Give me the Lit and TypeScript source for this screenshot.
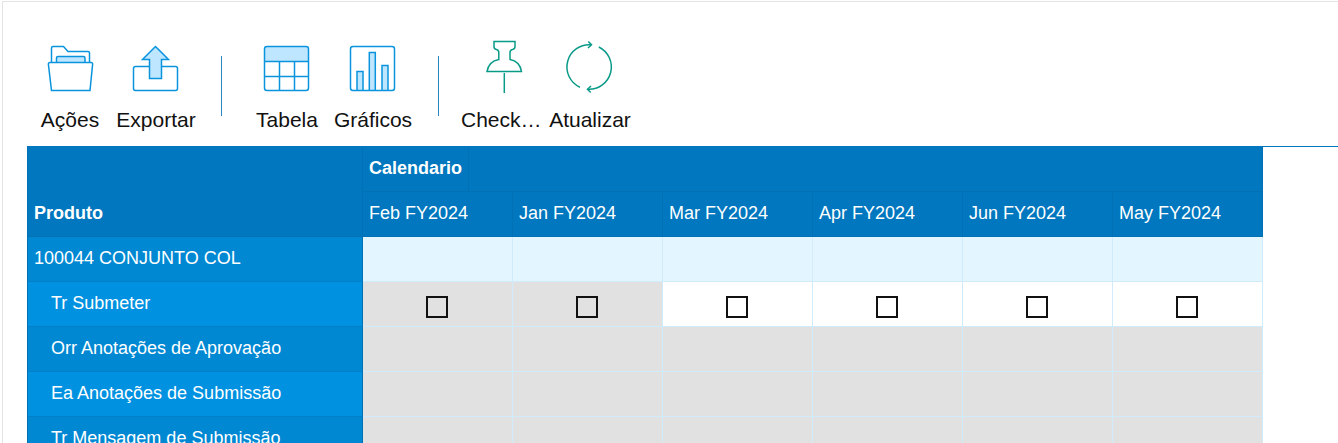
import { LitElement, html, css, svg, SVGTemplateResult } from "lit";
import { customElement } from "lit/decorators.js";
import { classMap } from "lit/directives/class-map.js";

interface Tool {
  label: string;
  icon: SVGTemplateResult;
  tone?: "green";
  clipped?: boolean;
}

interface Row {
  label: string;
  kind: "total" | "check" | "note";
}

const folder = svg`
  <path d="M8.5 22V8q0-1.5 1.500-1.500H20.500L25 11.500H45q1.500 0 1.500 1.500V22"/>
  <path class="fill" d="M13.500 22V18q0-1.500 1.500-1.500H40.500q1.500 0 1.500 1.500V22"/>
  <path d="M7 22.500H48q1.800 0 1.600 1.800L47 50.500H8.500L5.400 24.300q-.2-1.800 1.600-1.800z"/>`;
const upload = svg`
  <rect x="4.5" y="26.5" width="44" height="24" rx="2"/>
  <path class="fill" d="M26.500 6.500 39.500 19.500H32.500V38.500H20.500V19.500H13.500z"/>`;
const grid = svg`
  <path class="fill" stroke="none" d="M5 21.500V9q0-2 2-2H46q2 0 2 2V21.500z"/>
  <rect x="4.5" y="6.5" width="44" height="44" rx="2.5"/>
  <path d="M4.500 21.500H48.500M4.500 36.500H48.500M19.500 21.500V50.500M34.500 21.500V50.500"/>`;
const chart = svg`
  <path class="fill" d="M11 50.500V31.500H17V50.500M23.300 50.500V12.500H29.300V50.500M36 50.500V25.500H42V50.500"/>
  <rect x="4.5" y="6.5" width="44" height="44" rx="2.5"/>`;
const pin = svg`
  <path d="M17 1.600H38V6.500Q38 9 35.500 9.500Q33 10 33 12.500V19.500Q42.800 21.300 44.500 31.500H10Q11.800 21.300 21.800 19.500V12.500Q21.800 10 19.400 9.500Q17 9 17 6.500z"/>
  <path d="M27.300 33V53"/>`;
const refresh = svg`
  <path d="M28.300 4.800A22.300 22.300 0 0 0 17 47.300M35.800 7A22.300 22.300 0 0 1 24.500 49.300"/>
  <path d="M25.300 1.500 28.500 4.800 25 8M28 46 24.500 49.300 27.700 52.500"/>`;

const groups: Tool[][] = [
  [
    { label: "Ações", icon: folder },
    { label: "Exportar", icon: upload },
  ],
  [
    { label: "Tabela", icon: grid },
    { label: "Gráficos", icon: chart },
  ],
  [
    { label: "Check…", icon: pin, tone: "green", clipped: true },
    { label: "Atualizar", icon: refresh, tone: "green" },
  ],
];

const periods = ["Feb FY2024", "Jan FY2024", "Mar FY2024", "Apr FY2024", "Jun FY2024", "May FY2024"];
const closedPeriods = new Set(["Feb FY2024", "Jan FY2024"]);

const rows: Row[] = [
  { label: "100044 CONJUNTO COL", kind: "total" },
  { label: "Tr Submeter", kind: "check" },
  { label: "Orr Anotações de Aprovação", kind: "note" },
  { label: "Ea Anotações de Submissão", kind: "note" },
  { label: "Tr Mensagem de Submissão", kind: "note" },
];

@customElement("tool-bar")
class ToolBar extends LitElement {
  static styles = css`
    :host {
      display: block;
    }
    .bar {
      display: flex;
      gap: 22px;
      padding: 38px 0 14px;
    }
    .group {
      display: flex;
    }
    .separator {
      width: 1px;
      margin: 16px 0;
      background: #2a86c2;
    }
    .tool {
      display: flex;
      flex-direction: column;
      align-items: center;
      gap: 14px;
      width: 86px;
      padding: 0;
      border: 0;
      background: none;
      color: #111;
      font: 21px/24px "Liberation Sans", Arial, sans-serif;
      cursor: pointer;
    }
    .label {
      white-space: nowrap;
    }
    .clipped {
      align-self: flex-start;
    }
    .icon {
      width: 54px;
      height: 54px;
      fill: none;
      stroke: #0a94de;
      stroke-width: 1.5;
    }
    .green {
      stroke: #0a9a88;
    }
    .fill {
      fill: #bfe6ff;
    }
  `;

  render() {
    return html`<div class="bar" role="toolbar">
      ${groups.map(
        (group, i) => html`${i ? html`<div class="separator"></div>` : ""}
          <div class="group">${group.map((tool) => this.renderTool(tool))}</div>`
      )}
    </div>`;
  }

  private renderTool(tool: Tool) {
    return html`<button class="tool" type="button">
      <svg class=${classMap({ icon: true, green: tool.tone === "green" })} viewBox="0 0 54 54" aria-hidden="true">
        ${tool.icon}
      </svg>
      <span class=${classMap({ label: true, clipped: !!tool.clipped })}>${tool.label}</span>
    </button>`;
  }
}

@customElement("plan-grid")
class PlanGrid extends LitElement {
  static styles = css`
    :host {
      display: block;
      border-top: 1px solid #0077be;
    }
    .grid {
      table-layout: fixed;
      width: 1236px;
      border-spacing: 0;
      color: #fff;
      font: 18px/22px "Liberation Sans", Arial, sans-serif;
    }
    .labels {
      width: 336px;
    }
    th,
    td {
      box-sizing: border-box;
      height: 45px;
      padding: 0 6px;
      border: 0 solid #0071b5;
      border-width: 0 1px 1px 0;
      text-align: left;
      white-space: nowrap;
    }
    .head {
      padding-bottom: 2px;
      background: #0077be;
    }
    .corner {
      padding: 0 6px 12px;
      border-left-width: 1px;
      vertical-align: bottom;
    }
    .dimension {
      padding: 0;
    }
    .dimension-name {
      display: inline-block;
      padding: 10px 6px 12px;
      border-right: 1px solid #0071b5;
    }
    .period,
    .row-label {
      font-weight: 400;
    }
    .row-label {
      padding: 0 6px 2px 23px;
      border-left-width: 1px;
      border-bottom-color: #007fc8;
      background: #0088d3;
    }
    .row:nth-child(even) .row-label {
      background: #0091e0;
    }
    .total .row-label {
      padding-left: 6px;
    }
    .cell {
      border-color: #cfebfc;
      background: #e1e1e1;
      text-align: center;
    }
    .total .cell {
      background: #e3f5ff;
    }
    .check .cell {
      padding: 6px 8px 0 6px;
    }
    .check .open {
      background: #fff;
    }
    .tick {
      appearance: none;
      display: block;
      box-sizing: border-box;
      width: 22px;
      height: 22px;
      margin: 0 auto;
      border: 2px solid #111;
    }
    .tick:checked {
      background: #111;
      background-clip: content-box;
      padding: 3px;
    }
  `;

  render() {
    return html`<table class="grid">
      <colgroup>
        <col class="labels" />
        ${periods.map(() => html`<col />`)}
      </colgroup>
      <thead>
        <tr>
          <th class="head corner" rowspan="2" scope="col">Produto</th>
          <th class="head dimension" colspan="6" scope="colgroup"><span class="dimension-name">Calendario</span></th>
        </tr>
        <tr>
          ${periods.map((p) => html`<th class="head period" scope="col">${p}</th>`)}
        </tr>
      </thead>
      <tbody>
        ${rows.map(
          (row) => html`<tr class="row ${row.kind}">
            <th class="row-label" scope="row">${row.label}</th>
            ${periods.map((p) => this.renderCell(row, p))}
          </tr>`
        )}
      </tbody>
    </table>`;
  }

  private renderCell(row: Row, period: string) {
    const closed = closedPeriods.has(period);
    return html`<td class=${classMap({ cell: true, open: !closed })}>
      ${row.kind === "check"
        ? html`<input class="tick" type="checkbox" aria-label="${row.label} ${period}" ?disabled=${closed} />`
        : ""}
    </td>`;
  }
}

@customElement("app-root")
class AppRoot extends LitElement {
  static styles = css`
    :host {
      display: block;
      box-sizing: border-box;
      height: 100vh;
      padding: 1px 0 0 2px;
      overflow: hidden;
      background: #fff;
    }
    .panel {
      box-sizing: border-box;
      height: 100%;
      padding-left: 24px;
      border: 1px solid #e4e4e4;
      border-width: 1px 0 0 1px;
      overflow: hidden;
    }
  `;

  render() {
    return html`<main class="panel">
      <tool-bar></tool-bar>
      <plan-grid></plan-grid>
    </main>`;
  }
}
